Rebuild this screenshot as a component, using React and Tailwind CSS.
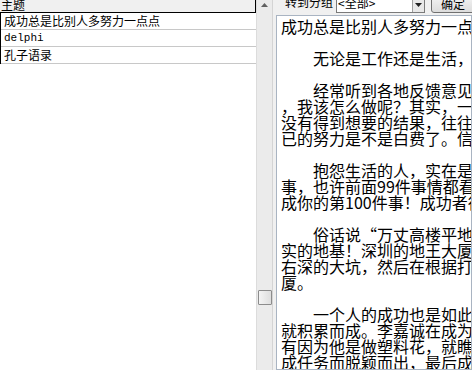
const lines = [
  { t: '成功总是比别人多努力一点点' },
  { t: '' },
  { t: '无论是工作还是生活，', indent: true },
  { t: '' },
  { t: '经常听到各地反馈意见，大家都在抱怨', indent: true },
  { t: '，我该怎么做呢？其实，一' },
  { t: '没有得到想要的结果，往往' },
  { t: '已的努力是不是白费了。信' },
  { t: '' },
  { t: '抱怨生活的人，实在是', indent: true },
  { t: '事，也许前面99件事情都看' },
  { t: '成你的第100件事！成功者往' },
  { t: '' },
  { t: '俗话说“万丈高楼平地', indent: true },
  { t: '实的地基！深圳的地王大厦' },
  { t: '右深的大坑，然后在根据打' },
  { t: '厦。' },
  { t: '' },
  { t: '一个人的成功也是如此', indent: true },
  { t: '就积累而成。李嘉诚在成为' },
  { t: '有因为他是做塑料花，就瞧' },
  { t: '成任务而脱颖而出，最后成' },
];

const rows = ['成功总是比别人多努力一点点', 'delphi', '孔子语录'];

export default function App() {
  return (
    <div
      className="flex h-[370px] w-[472px] overflow-hidden bg-[#f0f0f0] text-black"
      style={{ fontFamily: '"Noto Sans CJK SC", sans-serif' }}
    >
      {/* list */}
      <div className="flex w-[256px] shrink-0 flex-col bg-white">
        <div className="h-[13px] overflow-hidden border-r border-b border-black bg-[#f0f0f0]">
          <div className="-mt-[3px] pl-[1px] text-[12px] leading-[16px]">主题</div>
        </div>
        <div className="border-l border-black">
          {rows.map((r) => (
            <div
              key={r}
              className="flex h-[17px] items-center border-b border-[#c8c8c8] pl-[3px] text-[12px] leading-[14px]"
            >
              {r === 'delphi' ? (
                <span style={{ fontFamily: '"Liberation Mono", monospace' }} className="text-[11px]">
                  {r}
                </span>
              ) : (
                r
              )}
            </div>
          ))}
        </div>
      </div>

      {/* scrollbar */}
      <div className="relative w-[16px] shrink-0 border-l border-[#dcdcdc] bg-[#ebebeb]">
        <div className="flex h-[10px] items-center justify-center">
          <svg width="7" height="4" viewBox="0 0 7 4">
            <path d="M0 4 L3.5 0 L7 4 Z" fill="#606060" />
          </svg>
        </div>
        <div className="absolute left-[1px] top-[290px] h-[15px] w-[14px] rounded-[1px] border border-[#8c8c8c] bg-gradient-to-r from-[#f4f4f4] to-[#dedede]" />
      </div>

      <div className="w-[4px] shrink-0 border-l border-[#d4d4d4] bg-[#f0f0f0]" />

      {/* right pane */}
      <div className="flex min-w-0 flex-1 flex-col">
        <div className="flex h-[15px] shrink-0 items-start overflow-hidden text-[12px]">
          <div className="-mt-[6px] ml-[9px] w-[51px] shrink-0 whitespace-nowrap leading-[16px]">转到分组</div>
          <div className="-mt-[4px] flex h-[17px] w-[89px] shrink-0 border border-[#7a7a7a] bg-white">
            <div className="flex-1 whitespace-nowrap pl-[1px] leading-[12px]">&lt;全部&gt;</div>
            <div className="flex w-[12px] items-center justify-center border-l border-[#a0a0a0] bg-[#e8e8e8]">
              <svg width="7" height="4" viewBox="0 0 7 4">
                <path d="M0 0 L3.5 4 L7 0 Z" fill="#202020" />
              </svg>
            </div>
          </div>
          <div className="-mt-[4px] ml-[6px] flex h-[17px] w-[44px] shrink-0 items-start justify-center whitespace-nowrap rounded-[3px] border border-[#707070] bg-gradient-to-b from-[#f2f2f2] to-[#dcdcdc] leading-[13px]">
            确定
          </div>
        </div>
        <div className="min-h-0 flex-1 overflow-hidden border border-[#a9b4c2] bg-white pl-[4px] pt-[2px]">
          {lines.map((l, i) => (
            <div
              key={i}
              className={`h-[16px] whitespace-nowrap text-[16px] leading-[16px] ${l.indent ? 'pl-[32px]' : ''}`}
            >
              {l.t}
            </div>
          ))}
        </div>
      </div>
    </div>
  );
}
